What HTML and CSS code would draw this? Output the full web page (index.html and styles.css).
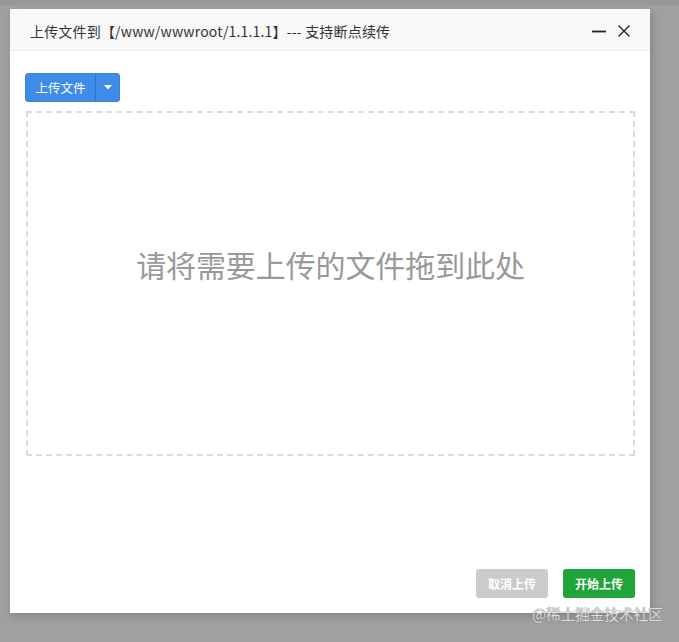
FILE: index.html
```html
<!DOCTYPE html>
<html lang="zh">
<head>
<meta charset="utf-8">
<title>上传文件</title>
<link rel="stylesheet" href="styles.css">
</head>
<body>
<div class="stage">
  <div class="modal">
    <div class="modal-header">
      <span class="modal-title">上传文件到【/www/wwwroot/1.1.1.1】--- 支持断点续传</span>
      <div class="win-ctrls">
        <svg class="ctrl" width="16" height="16" viewBox="0 0 16 16"><path d="M1 8.5H15" stroke="#222" stroke-width="1.8"/></svg>
        <svg class="ctrl" width="16" height="16" viewBox="0 0 16 16"><path d="M2.5 2.5L13.5 13.5M13.5 2.5L2.5 13.5" stroke="#222" stroke-width="1.4"/></svg>
      </div>
    </div>
    <div class="modal-body">
      <div class="split-btn">
        <span class="split-main">上传文件</span>
        <span class="split-caret"><svg width="8" height="5" viewBox="0 0 8 5"><path d="M0 0H8L4 4.5Z" fill="#fff"/></svg></span>
      </div>
      <div class="dropzone">
        <span class="drop-text">请将需要上传的文件拖到此处</span>
      </div>
    </div>
    <div class="modal-footer">
      <span class="btn btn-cancel">取消上传</span>
      <span class="btn btn-start">开始上传</span>
    </div>
  </div>
  <div class="watermark">@稀土掘金技术社区</div>
</div>
</body>
</html>
```
FILE: styles.css
```css
html, body {
  margin: 0;
  padding: 0;
}
body {
  width: 679px;
  height: 642px;
  background: #a1a1a1;
  font-family: "Microsoft YaHei", "Noto Sans CJK SC", "Liberation Sans", sans-serif;
  overflow: hidden;
}
.stage {
  position: relative;
  width: 679px;
  height: 642px;
  padding: 9px 0 0 10px;
  box-sizing: border-box;
  background: linear-gradient(to bottom, #979797 0, #979797 5px, #a0a0a0 5px);
}
.modal {
  width: 640px;
  height: 604px;
  background: #fff;
  display: flex;
  flex-direction: column;
  box-shadow: 2px 3px 8px rgba(0, 0, 0, 0.18);
}
.modal-header {
  height: 41px;
  background: #f8f8f8;
  border-bottom: 1px solid #ececec;
  display: flex;
  align-items: center;
  justify-content: space-between;
  padding: 0 18px 0 20px;
  flex-shrink: 0;
}
.modal-title {
  font-size: 14px;
  color: #333;
  letter-spacing: 0.18px;
  margin-top: 3px;
}
.win-ctrls {
  display: flex;
  gap: 9px;
  align-items: center;
  margin-top: 2px;
}
.ctrl {
  display: block;
}
.modal-body {
  padding: 22px 15px 0 15px;
  flex: 1;
}
.split-btn {
  display: inline-flex;
  height: 29px;
  border-radius: 3px;
  background: #3f8ce8;
  border: 1px solid #3a82da;
  box-sizing: border-box;
  overflow: hidden;
}
.split-main {
  width: 69px;
  display: flex;
  align-items: center;
  justify-content: center;
  color: #fff;
  font-size: 12.5px;
}
.split-caret {
  width: 23px;
  border-left: 1px solid #2f72c6;
  display: flex;
  align-items: center;
  justify-content: center;
}
.split-caret svg {
  display: block;
}
.dropzone {
  margin: 9px 0 0 1px;
  width: 609px;
  height: 345px;
  box-sizing: border-box;
  border: 2px dashed #dcdcdc;
  display: flex;
  align-items: center;
  justify-content: center;
}
.drop-text {
  font-size: 30px;
  color: #999;
  margin-top: -39px;
  letter-spacing: -0.1px;
}
.modal-footer {
  display: flex;
  justify-content: flex-end;
  gap: 15px;
  padding: 0 15px 15px 0;
}
.btn {
  width: 72px;
  height: 29px;
  border-radius: 3px;
  display: flex;
  align-items: center;
  justify-content: center;
  color: #fff;
  font-size: 12px;
  font-weight: bold;
}
.btn-cancel {
  background: #cbcbcb;
}
.btn-start {
  background: #20a53a;
}
.watermark {
  position: absolute;
  left: 532px;
  top: 603px;
  font-size: 15px;
  color: rgba(255, 255, 255, 0.75);
  text-shadow: 0 0 1px #777, 0 0 1px #777;
  letter-spacing: -0.4px;
}
```
